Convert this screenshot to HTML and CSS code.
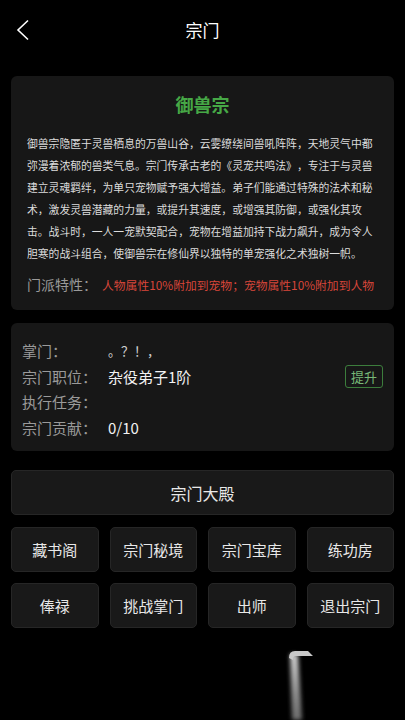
FILE: index.html
```html
<!DOCTYPE html>
<html lang="zh">

<head>
    <meta charset="UTF-8">
    <meta name="viewport" content="width=device-width, initial-scale=1.0">
    <title>宗门</title>
    <link rel="stylesheet" href="styles.css">
</head>

<body>
    <div class="page">
        <header class="topbar">
            <a class="topbar__back" href="#">
                <svg width="14" height="22" viewBox="0 0 14 22">
                    <polyline points="12,1.5 2,11 12,20.5" fill="none" stroke="#fff" stroke-width="1.6" />
                </svg>
            </a>
            <h1 class="topbar__title">宗门</h1>
            <span></span>
        </header>

        <main class="page__content">
            <section class="card sect">
                <h2 class="sect__name">御兽宗</h2>
                <p class="sect__desc">御兽宗隐匿于灵兽栖息的万兽山谷，云雾缭绕间兽吼阵阵，天地灵气中都弥漫着浓郁的兽类气息。宗门传承古老的《灵宠共鸣法》，专注于与灵兽建立灵魂羁绊，为单只宠物赋予强大增益。弟子们能通过特殊的法术和秘术，激发灵兽潜藏的力量，或提升其速度，或增强其防御，或强化其攻击。战斗时，一人一宠默契配合，宠物在增益加持下战力飙升，成为令人胆寒的战斗组合，使御兽宗在修仙界以独特的单宠强化之术独树一帜。</p>
                <div class="sect__trait">
                    <span class="sect__trait-label">门派特性：</span>
                    <span class="sect__trait-value">人物属性10%附加到宠物；宠物属性10%附加到人物</span>
                </div>
            </section>

            <section class="card status">
                <div class="status__row">
                    <span class="status__label">掌门：</span>
                    <span class="status__value status__value--dim">。？！，</span>
                </div>
                <div class="status__row">
                    <span class="status__label">宗门职位：</span>
                    <span class="status__value">杂役弟子1阶</span>
                    <button class="status__action">提升</button>
                </div>
                <div class="status__row">
                    <span class="status__label">执行任务：</span>
                    <span class="status__value"></span>
                </div>
                <div class="status__row">
                    <span class="status__label">宗门贡献：</span>
                    <span class="status__value">0/10</span>
                </div>
            </section>

            <button class="btn btn--wide">宗门大殿</button>

            <div class="actions">
                <button class="btn">藏书阁</button>
                <button class="btn">宗门秘境</button>
                <button class="btn">宗门宝库</button>
                <button class="btn">练功房</button>
                <button class="btn">俸禄</button>
                <button class="btn">挑战掌门</button>
                <button class="btn">出师</button>
                <button class="btn">退出宗门</button>
            </div>
        </main>

        <div class="glare">
            <svg width="60" height="72" viewBox="0 0 60 72">
                <defs>
                    <linearGradient id="streak" x1="0" y1="0" x2="0" y2="1">
                        <stop offset="0" stop-color="#d0d0d0" />
                        <stop offset="0.6" stop-color="#8a8a8a" />
                        <stop offset="1" stop-color="#6a6a6a" />
                    </linearGradient>
                    <filter id="soft" x="-50%" y="-10%" width="200%" height="130%">
                        <feGaussianBlur stdDeviation="2.2" />
                    </filter>
                </defs>
                <path d="M14 6 L16 72 L26 72 L22 6 Z" fill="url(#streak)" filter="url(#soft)" />
                <path d="M13 10 Q13 3 19 3 L32 3 L37 8 L20 8 Q17 8 17 12 Z" fill="#c8c8c8" />
            </svg>
        </div>
    </div>
</body>

</html>
```

FILE: styles.css
```css
* {
    box-sizing: border-box;
}

body {
    background-color: #000;
    color: #e6e6e6;
    font-family: "Noto Sans CJK SC", "Noto Sans", sans-serif;
    margin: 0;
    text-spacing-trim: space-all;
}

.page {
    min-height: 720px;
    position: relative;
    overflow: hidden;
}

.topbar {
    align-items: center;
    display: grid;
    grid-template-columns: 40px 1fr 40px;
    height: 58px;
}

.topbar__back {
    display: flex;
    padding-left: 16px;
    padding-top: 1px;
}

.topbar__title {
    color: #fff;
    font-size: 17px;
    font-weight: 400;
    margin: 0;
    text-align: center;
}

.page__content {
    padding: 18px 11px 0;
}

.card {
    background-color: #171717;
    border-radius: 6px;
}

.sect {
    padding: 16px 16px 14px;
}

.sect__name {
    color: #46a846;
    font-size: 18px;
    font-weight: 700;
    line-height: 24px;
    margin: 0 0 16px;
    text-align: center;
}

.sect__desc {
    color: #dcdcdc;
    font-size: 10.8px;
    line-height: 22px;
    margin: 0;
}

.sect__trait {
    align-items: baseline;
    display: flex;
    line-height: 22px;
    margin-top: 9px;
    white-space: nowrap;
}

.sect__trait-label {
    color: #9a9a9a;
    flex-shrink: 0;
    font-size: 14px;
}

.sect__trait-value {
    color: #d8463a;
    flex-shrink: 0;
    font-size: 11.8px;
    margin-left: 5px;
}

.status {
    margin-top: 13px;
    padding: 15px 11px 11px;
}

.status__row {
    align-items: center;
    display: flex;
    height: 25.5px;
}

.status__label {
    color: #9a9a9a;
    font-size: 15px;
    width: 86px;
}

.status__value {
    color: #f2f2f2;
    flex: 1;
    font-size: 15px;
}

.status__value--dim {
    color: #d0d0d0;
    font-size: 13px;
}

.status__action {
    background: none;
    border: 1px solid #3c7d3c;
    border-radius: 3px;
    color: #78b878;
    font-family: inherit;
    font-size: 13px;
    height: 23px;
    line-height: 1;
    padding: 0 5px;
}

.btn {
    background-color: #191919;
    border: 1px solid #262626;
    border-radius: 5px;
    color: #e8e8e8;
    font-family: inherit;
    font-size: 15px;
    height: 45px;
    padding: 0;
}

.btn--wide {
    display: block;
    font-size: 16px;
    margin-top: 19px;
    width: 100%;
}

.actions {
    display: grid;
    gap: 11px;
    grid-template-columns: repeat(4, 1fr);
    margin-top: 12px;
}

.glare {
    left: 276px;
    position: absolute;
    top: 648px;
}

.glare svg {
    display: block;
}
```
